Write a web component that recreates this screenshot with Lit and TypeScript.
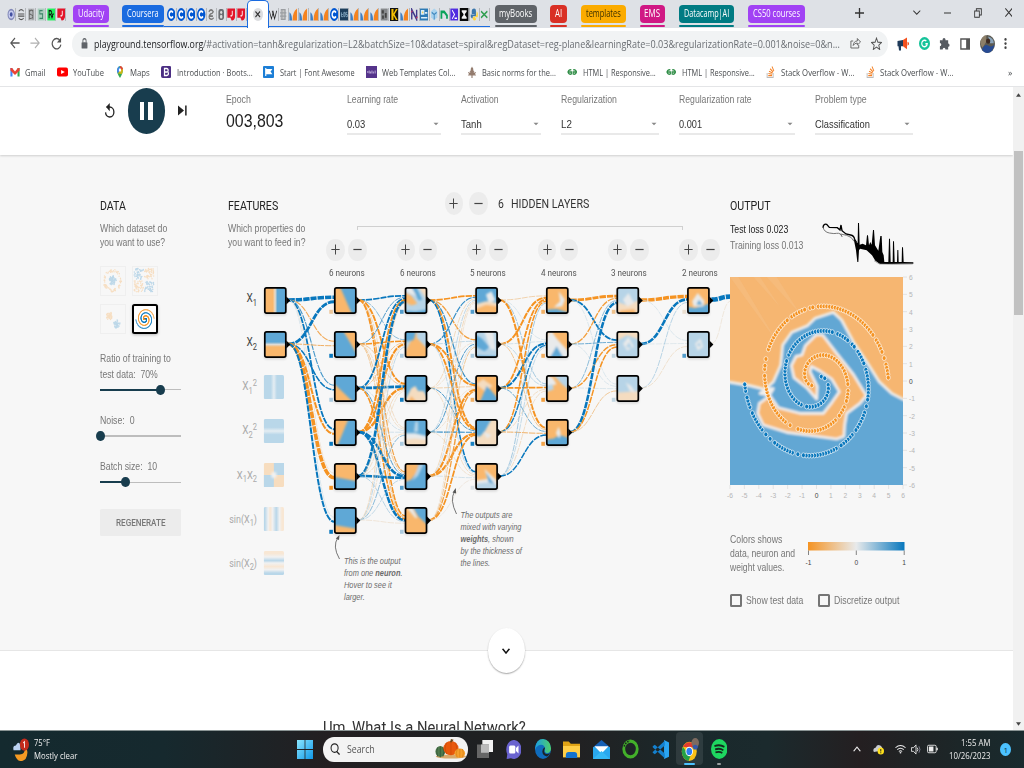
import { LitElement, html, svg, css } from "lit";
import { customElement, property } from "lit/decorators.js";

const O = "#f9b76c", B = "#5fa8d6", N = "#e8eaeb", LO = "#f4dcc0", LB = "#b7d4e7";
const BLUE = "#0877bd", ORANGE = "#f59322";

/** A single line of text condensed or widened to an exact advance width. */
@customElement("fit-text")
class FitText extends LitElement {
  @property({ type: Number }) w = 10;
  static styles = css`
    :host { display: inline-block; white-space: nowrap; flex: none; }
    .run { display: inline-block; transform-origin: 0 50%; white-space: pre; }
  `;
  firstUpdated() {
    const run = this.renderRoot.querySelector(".run") as HTMLElement;
    this.style.width = this.w + "px";
    const k = this.w / run.offsetWidth;
    run.style.transform = `scaleX(${k})`;
    run.style.marginRight = `${this.w - run.offsetWidth}px`;
  }
  render() { return html`<span class="run"><slot></slot></span>`; }
}

const t = (text: string, w: number, cls = "") => html`<fit-text class=${cls} .w=${w}>${text}</fit-text>`;
const ic = (w: number, h: number, body: unknown, vb = "0 0 24 24") =>
  html`<svg class="ic" width=${w} height=${h} viewBox=${vb} preserveAspectRatio="none">${body}</svg>`;

// ---------- favicons of the tab strip ----------
const fav: Record<string, unknown> = {
  ring: svg`<circle cx="12" cy="12" r="9" fill="#c9cdf0" stroke="#8288b8" stroke-width="3"/><circle cx="12" cy="12" r="4" fill="#4350a0"/>`,
  dots: svg`<path d="M5 6q7-6 14 0M3 11h18M3 15h18M5 19q7 5 14 0" fill="none" stroke="#555" stroke-width="2"/>`,
  grey: svg`<rect x="3" y="1" width="18" height="22" fill="#b5b8bb"/><path d="M17 6q-5-4-9 0t3 6 5 5-9 2M7 3v18M17 3v18" fill="none" stroke="#666" stroke-width="2"/>`,
  mint: svg`<rect x="2" y="1" width="20" height="22" fill="#a9cdbd"/><path d="M16 5H8v6h8v8H7" fill="none" stroke="#3c8468" stroke-width="2.4"/>`,
  rc: svg`<rect x="1" y="1" width="22" height="22" fill="#1ff05b"/><path d="M6 19V5h5q5 3 0 7H7m4 0 4 7m4-8q-5 0-3 6" fill="none" stroke="#111" stroke-width="2.5"/>`,
  red: svg`<path d="M1 1h22v16q-3 7-10 6l-3-5H1z" fill="#e3152a"/><path d="M15 5v7q-1 4-5 2" fill="none" stroke="#fff" stroke-width="2.5"/>`,
  c: svg`<circle cx="12" cy="12" r="12" fill="#0056d2"/><path d="M17 8.500a6 6 0 1 0 0 7" fill="none" stroke="#fff" stroke-width="4"/>`,
  two: svg`<path d="M5 7q7-7 13 0-3 4-8 4-6 4-3 8 7 4 12-1M7 15h10" fill="none" stroke="#777" stroke-width="3"/>`,
  eight: svg`<rect x="4" y="2" width="16" height="20" rx="5" fill="#6b6e72"/><circle cx="12" cy="8" r="3" fill="#ddd"/><circle cx="12" cy="16" r="3.500" fill="#ddd"/>`,
  w: svg`<path d="M1 5l6 15 5-13 4 13L22 5M9 5l7 15" fill="none" stroke="#222" stroke-width="2"/>`,
  flower: svg`<path d="M6 3h12v18H6zM9 3v18M15 3v18M3 9h18M3 15h18" fill="#ccc" stroke="#9a9da1" stroke-width="2"/>`,
  bars: svg`<path d="M1 8q7 2 8 15H1z" fill="#3f7fc4"/><path d="M10 23q0-16 13-22v22z" fill="#f58320"/>`,
  eds: svg`<rect x="0" y="1" width="24" height="22" fill="#1d3e5c"/><path d="M4 8v8h5M4 12h4M11 8v8h3l1-4-1-4zM21 8h-4v4h4v4h-4" fill="none" stroke="#8fb3cc" stroke-width="1.800"/>`,
  photo: svg`<rect x="2" y="1" width="20" height="22" fill="#85878a"/><path d="M5 4h6v6H5zM14 9h5v9h-5zM6 14h5v6H6z" fill="#444"/>`,
  k: svg`<rect width="24" height="24" fill="#111"/><path d="M4 2h6v8l7-8h5L13 12l9 10h-5l-7-8v8H4z" fill="#f5c000"/>`,
  n: svg`<path d="M5 21V3l14 18V3" fill="none" stroke="#433a8b" stroke-width="4"/><path d="M3 8l4-3M17 19l5-3" stroke="#d23a5f" stroke-width="2"/>`,
  pc: svg`<rect y="1" width="24" height="22" fill="#2d7ab5"/><path d="M4 5h7v6H4zM14 9h7M3 18h18" fill="#f4d35e" stroke="#dbeefa" stroke-width="3"/>`,
  cube: svg`<path d="M12 1l9 5v11l-9 6-9-6V6z" fill="#a9d3ef"/><path d="M5 8l7 4 7-4M12 12v9" fill="none" stroke="#3d86bd" stroke-width="2.500"/>`,
  arc: svg`<path d="M4 20V7l8 0 8 7v6" fill="none" stroke="#0aa35a" stroke-width="5"/>`,
  sum: svg`<rect x="1" y="1" width="22" height="22" fill="#4f2ce0"/><path d="M6 4l7 8-7 8M13 19h7" fill="none" stroke="#fff" stroke-width="2.500"/>`,
  blk: svg`<rect width="24" height="24" fill="#080808"/><path d="M5 4h14v3l-5 4v2l5 4v3H5v-3l5-4v-2L5 7z" fill="#f3f3f3"/>`,
  py: svg`<path d="M12 1Q5 1 5 6v5h8v1H2q-1 6 3 7h3v-4h9V5q0-4-5-4z" fill="#3a76ab"/><path d="M19 6q5 3 3 11h-8v2h4q-1 5-7 4-4-1-3-6l8-2q3-1 3-9z" fill="#ffd43b"/>`,
  x: svg`<path d="M3 6l18 12M21 6L3 18" fill="none" stroke="#2f9e4f" stroke-width="3.500"/>`,
};

// ---------- network data ----------
type Poly = [string, string];
const LX = [345.3, 416, 486.6, 557.3, 627.8, 698.4];
const RY = (i: number) => 300.5 + 44 * i;
const heat: [string, Poly[]][][] = [
  [
    [B, [[O, "-4,-4 6,-4 26,34 -4,34"]]],
    [B, [[O, "10,-4 34,-4 34,30"]]],
    [B, [[O, "-4,7 30,34 -4,34"]]],
    [B, [[O, "-4,-4 21,-4 2,34 -4,34"]]],
    [B, [[O, "-4,-4 34,-4 34,21 -4,15"]]],
    [B, [[O, "-4,20 34,25 34,34 -4,34"]]],
  ],
  [
    [LB, [[LO, "16,-4 34,-4 34,18"], [N, "-4,-4 10,-4 16,10 4,6"], [B, "8,-2 15,-2 24,14 19,15"], [O, "-4,4 8,9 17,19 8,21 -4,15"], [B, "-4,27 14,28 34,25 34,34 -4,34"]]],
    [O, [[B, "-4,-4 16,-4 12,9 3,13 -4,8"], [LB, "16,-4 34,-4 34,22 16,7"], [LB, "-4,14 8,10 -2,26"]]],
    [B, [[LO, "-4,34 8,15 14,12 18,18 26,18 34,30 34,34"], [O, "2,34 8,24 20,34"]]],
    [B, [[N, "-4,16 14,16 34,20 34,34 -4,34"], [LO, "-4,23 14,22 34,24 34,34 -4,34"], [LB, "14,2 18,2 18,14 12,14"]]],
    [B, [[O, "-4,-4 20,-4 16,10 8,19 -4,22"], [LB, "20,0 26,0 18,14 10,20"]]],
    [O, [[B, "8,-4 34,-4 34,22 18,10"], [N, "2,0 10,0 17,12 14,12"]]],
  ],
  [
    [B, [[N, "14,8 22,4 28,15 18,18"], [LO, "-4,20 14,16 34,18 34,34 -4,34"], [O, "-4,26 14,20 34,22 34,34 -4,34"]]],
    [LB, [[N, "10,-4 24,-4 28,22 20,20"], [B, "-4,2 8,8 19,18 12,23 -4,16"], [B, "-4,28 34,29 34,34 -4,34"]]],
    [O, [[LO, "0,10 10,4 24,12 12,18"], [B, "4,34 12,18 15,12 20,16 34,30 34,34"]]],
    [LO, [[B, "-4,-4 24,-4 12,14 5,20 -4,18"], [N, "10,14 22,18 16,22"]]],
    [O, [[N, "-2,20 16,18 12,6 30,20 30,30 0,30"], [LB, "-4,24 14,22 34,25 34,34 -4,34"], [B, "14,10 26,24 18,22"]]],
  ],
  [
    [O, [[N, "17,4 26,14 22,22 10,23 19,16"], [B, "-4,26 14,25 34,30 34,34 -4,34"]]],
    [O, [[N, "-4,2 6,-2 14,8 34,26 34,34 -4,34"], [LO, "-4,-4 8,-4 -4,14"], [B, "2,34 14,17 26,34"]]],
    [O, [[LB, "6,-4 34,-4 34,18 22,10"], [N, "-4,-2 8,2 14,10 -4,14"], [LB, "-4,12 8,10 10,16 -4,20"]]],
    [O, [[B, "-4,24 10,22 18,18 34,22 34,34 -4,34"], [N, "13,16 17,8 20,16 18,22"]]],
  ],
  [
    [LB, [[LO, "-4,16 12,20 34,14 34,34 -4,34"], [O, "4,27 24,25 30,34 0,34"], [N, "8,14 16,6 24,18 14,22"]]],
    [LB, [[LO, "-4,-4 34,-4 34,10 14,4 -4,12"], [N, "8,14 16,6 24,18 14,22"], [LB, "12,18 17,12 22,20"]]],
    [LB, [[LO, "-4,20 34,18 34,34 -4,34"], [N, "12,8 20,12 26,20 18,18"]]],
  ],
  [
    [O, [[B, "-4,22 10,24 34,18 34,34 -4,34"], [N, "6,16 14,6 24,16 22,22 8,22"], [B, "12,20 16,14 21,20"]]],
    [LB, [[N, "10,14 18,8 22,18 14,22"], [LB, "12,16 17,12 19,18"]]],
  ],
];
// Signed weights, source-major.
const W: number[][][] = [
  [[3.6, -1.1, 1.1, 1.8, -0.3, 0.2], [2.8, -1, 1.5, -2, -3.6, 2]],
  [
    [1.7, 0.8, -1.9, -0.5, -1.2, -1.5], [1, -1.5, -0.8, -0.4, -0.8, -0.8], [1.8, -0.8, 2.8, 0.3, 1, -1.6],
    [-1.8, -2, -2.4, 0.3, 2.6, 2.5], [2.6, -0.4, -0.5, -0.5, 2.6, 0.6], [-0.6, 0.5, -0.4, 0.8, 0.5, -0.3],
  ],
  [
    [-1.7, -1.3, 1.2, -2, 1.5], [1.2, 0.5, -1.9, -1.8, 0.5], [-0.6, -0.3, -0.7, 1, -0.5],
    [0.5, 1, -0.3, 1.2, -0.4], [-0.6, 0.3, -2, -2.2, 0.3], [-0.3, -0.8, -1.3, -1.7, -0.2],
  ],
  [[-0.7, 0.2, 0.7, -2], [-2, 0.3, 0.5, -0.8], [-1.8, 2, -1.7, 0.9], [-1.5, 1.4, -0.5, -1], [0.7, 0.5, -0.5, 1.5]],
  [[-2.8, 1.8, 0.2], [-1.3, 0.9, 0.2], [0.8, -1.4, 0.2], [2.5, -1.5, -0.8]],
  [[-3.4, 0.2], [2.6, 0.15], [0.6, -0.4]],
];
const bias: number[][] = [[-0.6, 1.5, 0.4, 1.5, -2, 1.5], [1, 0.4, 1.4, 0.4, 1, 0.4], [1, 0.4, -1, 1.4, 0.1], [-1, -1, -1.3, -1.2], [-0.7, 0.25, 0.25], [-0.2, 1]];

const mix = (v: number) => {
  const k = Math.min(1, Math.abs(v) / 1.5);
  const a = [232, 234, 235], b = v > 0 ? [8, 119, 189] : [245, 147, 34];
  return `rgb(${a.map((c, i) => Math.round(c + (b[i] - c) * k)).join(",")})`;
};
const wrapText = (x: number, y: number, s: unknown, fs = 10, cls = "d") =>
  svg`<text class=${cls} transform="translate(${x} ${y}) scale(.833 1)" font-size=${fs}>${s}</text>`;

function link(x1: number, y1: number, x2: number, y2: number, v: number) {
  const m = (x1 + x2) / 2;
  return svg`<path d="M${x1} ${y1}C${m} ${y1} ${m} ${y2} ${x2} ${y2}" fill="none" stroke=${mix(v)} stroke-width=${Math.max(0.6, Math.abs(v))} stroke-dasharray="6.4 1"/>`;
}

function cell(x: number, y: number, bg: string, polys: Poly[]) {
  return svg`
    <rect x=${x - 11.3} y=${y - 12.5} width="22.6" height="27.6" rx="2.500" fill="#000" opacity=".12" filter="url(#soft)"/>
    <path d="M${x + 11} ${y - 4}l4 4-4 4z" fill="#000"/>
    <svg x=${x - 10.4} y=${y - 12.6} width="20.8" height="25.2" viewBox="0 0 30 30" preserveAspectRatio="none">
      <rect width="30" height="30" fill=${bg}/>
      <g filter="url(#melt)">${polys.map(([c, p]) => svg`<polygon points=${p} fill=${c}/>`)}</g>
    </svg>
    <rect x=${x - 10.5} y=${y - 12.6} width="21" height="25.200" rx="1.800" fill="none" stroke="#000" stroke-width="1.700"/>`;
}

function network() {
  const links: unknown[] = [];
  const srcX = [275.3, ...LX];
  W.forEach((layer, l) => {
    const n = layer.length;
    layer.forEach((row, i) => row.forEach((v, j) => {
      links.push(link(srcX[l] + 13, RY(i) - 0.5, LX[l] - 11, RY(j) - 1 + ((i - (n - 1) / 2) / n) * 9, v));
    }));
  });
  links.push(link(LX[5] + 13, 299.5, 731, 296.5, 4.6));
  links.push(link(LX[5] + 13, 343.5, 731, 301, -0.25));
  const small = (k: number, body: unknown) =>
    svg`<svg x="263.700" y=${375 + 44 * k} width="20.300" height="24" viewBox="0 0 30 30" preserveAspectRatio="none" opacity=".4">${body}</svg>`;
  const lab = (xx: number, y: number, s: unknown, on = false, fs = 12) =>
    svg`<text class=${on ? "lab on" : "lab"} font-size=${fs} text-anchor="end" transform="translate(${xx} ${y}) scale(.833 1)">${s}</text>`;
  const sub = (s: string) => svg`<tspan font-size="9" dy="3.500">${s}</tspan>`;
  const sup = svg`<tspan font-size="9" dy="-8">2</tspan>`;
  return html`<svg class="net" width="502" height="323" viewBox="228 287 502 323">
    <defs>
      <filter id="melt" x="-20%" y="-20%" width="140%" height="140%"><feGaussianBlur stdDeviation="1.3"/></filter>
      <filter id="soft" x="-30%" y="-30%" width="160%" height="160%"><feGaussianBlur stdDeviation="1.2"/></filter>
      <linearGradient id="x1"><stop offset=".38" stop-color=${O}/><stop offset=".49" stop-color="#e9dccc"/><stop offset=".6" stop-color=${B}/></linearGradient>
      <linearGradient id="x2" x2="0" y2="1"><stop offset=".4" stop-color=${B}/><stop offset=".5" stop-color="#dedbd6"/><stop offset=".6" stop-color=${O}/></linearGradient>
      <linearGradient id="q1"><stop offset=".35" stop-color=${B}/><stop offset=".48" stop-color="#bcd9ea"/><stop offset=".52" stop-color="#bcd9ea"/><stop offset=".65" stop-color=${B}/></linearGradient>
      <linearGradient id="q2" x2="0" y2="1"><stop offset=".35" stop-color=${B}/><stop offset=".48" stop-color="#bcd9ea"/><stop offset=".52" stop-color="#bcd9ea"/><stop offset=".65" stop-color=${B}/></linearGradient>
      <linearGradient id="s1"><stop offset=".05" stop-color=${B}/><stop offset=".22" stop-color=${N}/><stop offset=".32" stop-color="#fad0a2"/><stop offset=".44" stop-color=${N}/><stop offset=".62" stop-color=${B}/><stop offset=".78" stop-color=${N}/><stop offset=".9" stop-color="#fad0a2"/></linearGradient>
      <linearGradient id="s2" x2="0" y2="1"><stop offset=".1" stop-color="#fad0a2"/><stop offset=".25" stop-color=${N}/><stop offset=".4" stop-color=${B}/><stop offset=".5" stop-color=${N}/><stop offset=".65" stop-color="#fad0a2"/><stop offset=".78" stop-color=${N}/><stop offset=".92" stop-color=${B}/></linearGradient>
    </defs>
    ${links}
    ${cell(275.3, RY(0), "url(#x1)", [])}
    ${cell(275.3, RY(1), "url(#x2)", [])}
    ${small(0, svg`<rect width="30" height="30" rx="2" fill="url(#q1)"/>`)}
    ${small(1, svg`<rect width="30" height="30" rx="2" fill="url(#q2)"/>`)}
    ${small(2, svg`<rect width="30" height="30" rx="2" fill=${O}/><path d="M15 0h15v15H15zM0 15h15v15H0z" fill=${B}/><circle cx="15" cy="15" r="4" fill=${N} filter="url(#melt)"/>`)}
    ${small(3, svg`<rect width="30" height="30" rx="2" fill="url(#s1)"/>`)}
    ${small(4, svg`<rect width="30" height="30" rx="2" fill="url(#s2)"/>`)}
    ${lab(257, 302, svg`X${sub("1")}`, true)}
    ${lab(257, 346, svg`X${sub("2")}`, true)}
    ${lab(257, 390, svg`X${sub("1")}${sup}`)}
    ${lab(257, 434, svg`X${sub("2")}${sup}`)}
    ${lab(257, 478.5, svg`X${sub("1")}<tspan dy="-3.5">X</tspan>${sub("2")}`, false, 11.3)}
    ${lab(257, 522.5, svg`sin(X${sub("1")}<tspan dy="-3.5">)</tspan>`, false, 10.8)}
    ${lab(257, 566.5, svg`sin(X${sub("2")}<tspan dy="-3.5">)</tspan>`, false, 10.8)}
    ${heat.map((col, l) => col.map(([bg, p], i) => svg`
      ${cell(LX[l], RY(i), bg, p)}
      <rect x=${LX[l] - 16} y=${RY(i) + 9.3} width="3.600" height="4" fill=${mix(bias[l][i])}/>`))}
    <path d="M339.500 559Q332 546 338 537.500" fill="none" stroke="#666" stroke-width=".9"/><path d="M335.800 538.500l3.700-3.500-.5 5z" fill="#555"/>
    <path d="M456.500 514Q449.500 500 454.500 491.500" fill="none" stroke="#666" stroke-width=".9"/><path d="M452.500 492.500l3.300-4.500.3 5.500z" fill="#555"/>
    ${wrapText(344, 563.5, "This is the output", 8.9, "note")}
    ${wrapText(344, 575.7, svg`from one <tspan font-weight="700">neuron</tspan>.`, 8.9, "note")}
    ${wrapText(344, 588, "Hover to see it", 8.9, "note")}
    ${wrapText(344, 600, "larger.", 8.9, "note")}
    ${wrapText(460.500, 517.5, "The outputs are", 8.9, "note")}
    ${wrapText(460.500, 529.5, "mixed with varying", 8.9, "note")}
    ${wrapText(460.500, 541.7, svg`<tspan font-weight="700">weights</tspan>, shown`, 8.9, "note")}
    ${wrapText(460.500, 553.8, "by the thickness of", 8.9, "note")}
    ${wrapText(460.500, 566, "the lines.", 8.9, "note")}
  </svg>`;
}

// ---------- output plot ----------
const rnd = (i: number) => { const s = Math.sin(i * 12.9898 + 4.1) * 43758.5453; return s - Math.floor(s); };
function spiral(delta: number, color: string, seed: number) {
  const out: unknown[] = [];
  for (let i = 1; i < 142; i++) {
    if (rnd(i + seed) < 0.14) continue;
    const r = 5 * Math.sqrt(i / 142), a = 1.75 * (r / 5) * 2 * Math.PI + delta;
    out.push(svg`<ellipse cx=${816.5 + r * Math.sin(a) * 14.42} cy=${381 - r * Math.cos(a) * 17.33} rx="2" ry="2.400" fill=${color} stroke="#fff" stroke-opacity=".75" stroke-width=".9"/>`);
  }
  return out;
}
const arm = "290,612 262,580 222,548 214,512 228,484 246,480 256,452 288,420 308,420 350,475 400,538 439,602 420,625 380,655 374,690 372,724 350,732 200,712 130,690 113,655 118,625 150,602 175,638 240,655 310,655 336,622 358,590 335,552 300,528 274,514 270,530 292,575";
const sea = "20,560 90,572 135,583 160,560 182,510 188,450 215,412 262,392 285,370 340,352 365,375 400,440 440,500 478,560 515,595 560,618 560,880 20,880";
function plot() {
  const k = [-6, -5, -4, -3, -2, -1, 0, 1, 2, 3, 4, 5, 6];
  return html`<svg class="plot" width="192" height="228" viewBox="730 273 192 228">
    <defs><filter id="edge"><feGaussianBlur stdDeviation="3.600"/></filter></defs>
    <svg x="730" y="277" width="173" height="208" viewBox="30 246 519 624" preserveAspectRatio="none">
      <rect x="30" y="246" width="519" height="624" fill="#f6b671"/>
      <path d="M30 246h25l120 200zM100 246h20l60 90zM140 246h30l70 110z" fill="#f5bf85" opacity=".5"/>
      <g filter="url(#edge)" stroke="#efeeec" stroke-width="8" stroke-linejoin="round">
        <polygon points=${sea} fill="#62a7d4"/><polygon points=${arm} fill="#f6b671"/>
        <path d="M120 595l20-14 20 0-12 20z" fill="#efeeec"/>
      </g>
    </svg>
    ${spiral(Math.PI, ORANGE, 900)}${spiral(0, BLUE, 17)}
    ${k.map(v => svg`<path d="M903 ${381 - v * 17.33}h4M${816.5 + v * 14.42} 485v4" stroke="#ddd" stroke-width=".8"/>
      <text class=${v ? "tick" : "tick zero"} transform="translate(${909} ${384 - v * 17.33}) scale(.833 1)">${v}</text>
      <text class=${v ? "tick" : "tick zero"} text-anchor="middle" transform="translate(${816.5 + v * 14.42} 498) scale(.833 1)">${v}</text>`)}
  </svg>`;
}

const thumbDots = (fn: (i: number) => [number, number, string], n: number, r = 0.9) =>
  Array.from({ length: n }, (_, i) => { const [x, y, c] = fn(i); return svg`<circle cx=${x} cy=${y} r=${r} fill=${c}/>`; });
const thumbs = [
  thumbDots(i => { const a = rnd(i) * 6.28, r = i % 2 ? rnd(i + 50) * 5 : 9.5 + rnd(i + 50) * 3; return [15 + r * Math.cos(a), 15 + r * Math.sin(a), i % 2 ? BLUE : ORANGE]; }, 150),
  thumbDots(i => { const x = rnd(i) * 12 + 1.5, y = rnd(i * 3 + 71) * 12 + 1.5, q = i % 4; return [x + (q & 1 ? 13.5 : 0), y + (q & 2 ? 14 : 0), q === 0 || q === 3 ? BLUE : ORANGE]; }, 200),
  thumbDots(i => { const a = rnd(i) * 6.28, r = rnd(i * 3 + 30) * 4.5; return [(i % 2 ? 20.5 : 11) + r * Math.cos(a), (i % 2 ? 20 : 11) + r * Math.sin(a), i % 2 ? BLUE : ORANGE]; }, 110),
  thumbDots(i => { const s = i % 2, j = i >> 1, r = (j / 150) * 12.5, a = 1.75 * (j / 150) * 6.283 + s * Math.PI; return [15 + r * Math.sin(a), 15 - r * Math.cos(a), s ? ORANGE : BLUE]; }, 300, 0.62),
];

const pm = () => html`<span class="pm">${ic(9, 11, svg`<path d="M12 1v22M1 12h22" stroke="#444" stroke-width="2.600"/>`)}</span><span class="pm">${ic(9, 11, svg`<path d="M1 12h22" stroke="#444" stroke-width="2.600"/>`)}</span>`;

@customElement("app-root")
class AppRoot extends LitElement {
  static styles = css`
    :host { display: block; width: 1024px; height: 768px; overflow: hidden; background: #fff; }
    * { box-sizing: border-box; }
    .ic { display: block; flex: none; }
    .shell { display: flex; flex-direction: column; width: 1024px; height: 768px; font-family: "Open Sans", "Noto Sans", sans-serif; font-size: 10px; color: #3c4043; }
    .tabs { height: 27.500px; background: #dee1e6; display: flex; align-items: stretch; flex: none; }
    .grp { display: flex; flex-direction: column; align-items: center; justify-content: space-between; padding-top: 5px; flex: none; height: 27px; }
    .pill { height: 17.500px; width: 100%; border-radius: 4px; color: #fff; display: flex; align-items: center; justify-content: center; line-height: 17px; }
    .pill.dark { color: #3a3000; }
    .bar { height: 1.600px; width: 100%; border-radius: 1px; }
    .favs { display: flex; padding-top: 7.500px; height: 27px; }
    .favs.first { margin-left: 6px; }
    .favs.line { border-bottom: 1.600px solid #1a6be0; }
    .favs.pre { padding-left: 2.500px; }
    .fv { width: 10.050px; height: 13.500px; padding-left: .5px; border-right: 1px solid #b4b7bb; }
    .active { width: 22px; height: 28px; border: 1.600px solid #1a6be0; border-bottom: 0; border-radius: 5px 5px 0 0; background: #fff; display: flex; align-items: center; justify-content: center; z-index: 1; }
    .xdot { width: 10.500px; height: 13px; border-radius: 50%; background: #dcdde0; display: flex; align-items: center; justify-content: center; }
    .wins { display: flex; align-items: center; height: 25px; margin-left: auto; }
    .tools { height: 32.500px; background: #fff; display: flex; align-items: center; padding-left: 9.500px; flex: none; }
    .nav { display: flex; gap: 10.500px; width: 62.500px; }
    .omni { width: 816px; height: 26px; border-radius: 11px / 13px; background: #f1f3f4; display: flex; align-items: center; padding: 0 6.500px 0 9px; font-size: 11.200px; color: #6a6e73; }
    .omni .host { color: #202124; margin-left: 5.500px; }
    .omni .share { margin: 0 0 0 auto; display: flex; gap: 9.500px; }
    .exts { display: flex; align-items: center; gap: 9.500px; padding-left: 9px; }
    .marks { height: 26.500px; display: flex; align-items: center; flex: none; border-bottom: 1.500px solid #e4e5e7; font-size: 9.600px; color: #4a4d50; padding-bottom: 1px; }
    .mk { display: flex; align-items: center; flex: none; }
    .view { height: 643px; display: flex; flex: none; overflow: hidden; }
    .page { width: 1013px; font-family: "Liberation Sans", Arial, sans-serif; background: #fff; overflow: hidden; }
    .scroll { width: 11px; background: #f1f1f1; display: flex; flex-direction: column; align-items: center; padding: 6px 0 4px; }
    .thumb { width: 9.500px; height: 164px; background: #c1c1c1; margin-top: 54px; }
    .scroll .down { margin-top: auto; }
    .controls { height: 68px; display: flex; box-shadow: 0 1px 2px rgba(0,0,0,.16); position: relative; z-index: 1; background: #fff; }
    .play { display: flex; align-items: center; height: 48px; width: 226px; padding-left: 104px; flex: none; }
    .pause { width: 37.700px; height: 45.500px; border-radius: 50%; background: #183d4e; margin: 0 13px 0 11px; margin-top: 1px; display: flex; align-items: center; justify-content: center; gap: 4px; }
    .pause i { width: 4.500px; height: 18px; background: #fff; }
    .ctl { display: flex; flex-direction: column; padding-top: 6.600px; font-size: 10.400px; color: #777; line-height: 14px; flex: none; }
    .sel { height: 20px; margin-top: 7.500px; border-bottom: 2px solid #e9e9e9; display: flex; justify-content: space-between; align-items: center; color: #333; font-size: 11.200px; padding-right: 2.500px; line-height: 18px; }
    .epoch { font-size: 18.500px; color: #222; line-height: 22px; margin-top: 2.500px; }
    .main { height: 496px; background: #f7f7f7; display: flex; padding-left: 100px; border-bottom: 1px solid #e6e6e6; }
    .h { font-family: Roboto, sans-serif; font-size: 12.600px; color: #222; line-height: 16px; height: 16px; display: flex; }
    .p { font-size: 10.400px; color: #777; line-height: 14px; display: flex; flex-direction: column; }
    .data { width: 128px; padding-top: 43px; flex: none; }
    .data .p { margin-top: 8.300px; }
    .sets { display: grid; grid-template-columns: 26px 26px; column-gap: 6px; row-gap: 8.500px; margin: 16.200px 0 16.300px -.5px; }
    .set { width: 26px; height: 30px; border: 1px solid #efefef; display: flex; align-items: center; justify-content: center; }
    .set .ic { opacity: .24; }
    .set.on { border: 2px solid #000; border-radius: 2.500px; background: #fff; box-shadow: 0 1px 3px rgba(0,0,0,.25); }
    .set.on .ic { opacity: 1; }
    .lbl { font-size: 10.400px; line-height: 16px; color: #777; display: flex; flex-direction: column; }
    .slider { width: 81px; height: 10px; display: flex; align-items: center; margin-top: 2px; }
    .slider + .lbl { margin-top: 18.300px; }
    .slider .done { height: 2px; background: #183d4e; }
    .slider .rest { height: 1.300px; background: #bdbdbd; flex: 1; }
    .slider .knob { width: 8.600px; height: 10px; border-radius: 50%; background: #183d4e; margin: 0 -4.300px; flex: none; z-index: 1; }
    .regen { width: 81px; height: 27px; background: #ececec; border-radius: 1.500px; display: flex; align-items: center; justify-content: center; font: 500 9.800px/27px Roboto, sans-serif; color: #777; margin-top: 22px; }
    .mid { width: 502px; flex: none; }
    .head { height: 132px; display: flex; }
    .feat { padding-top: 43px; width: 96.500px; flex: none; }
    .feat .p { margin-top: 8.300px; }
    .layers { padding-top: 37.500px; width: 405px; flex: none; }
    .lh { display: flex; align-items: center; padding-left: 120px; height: 23px; font: 12.600px/23px Roboto, sans-serif; color: #333; }
    .pm { width: 18.600px; height: 22.500px; border-radius: 50%; background: #ececec; display: flex; align-items: center; justify-content: center; flex: none; }
    .lh .pm + .pm { margin: 0 10.500px 0 6px; }
    .bracket { margin: 10.500px 0 0 32.500px; width: 326px; height: 4px; border: 1px solid #d0d0d0; border-bottom: 0; }
    .cols { display: flex; margin-top: 9px; }
    .col { width: 70.600px; flex: none; }
    .pmr { display: flex; gap: 3.500px; padding-left: 1.500px; height: 22.500px; }
    .nn { font: 9.600px/14px Roboto, sans-serif; color: #555; padding-left: 4.500px; margin-top: 4.500px; display: block; }
    .net { display: block; overflow: visible; }
    .lab { font-family: Roboto, sans-serif; fill: #aaa; }
    .on.lab { fill: #444; }
    .note { font-style: italic; fill: #6c6c6c; }
    .out { width: 200px; padding-top: 43px; flex: none; }
    .out .loss { display: flex; font-size: 10.400px; line-height: 16px; height: 51px; justify-content: space-between; padding: 8px 16px 0 0; color: #777; }
    .out .loss .dark { color: #222; }
    .lossl { display: flex; flex-direction: column; }
    .lossc { overflow: visible; }
    .plot { display: block; margin-top: 8px; overflow: visible; }
    .tick { font-size: 8px; fill: #b5b5b5; }
    .zero { fill: #444; }
    .legend { display: flex; margin-top: 32.500px; justify-content: space-between; padding-right: 26px; }
    .legend svg { overflow: visible; }
    .checks { display: flex; align-items: center; margin-top: 17.500px; font-size: 10.400px; color: #777; height: 16px; line-height: 16px; }
    .box { width: 11.500px; height: 13.500px; border: 2px solid #757575; border-radius: 1.500px; margin-right: 4.500px; }
    .checks .box ~ .box { margin-left: 14.500px; }
    .article { height: 79px; display: flex; flex-direction: column; position: relative; }
    .more { position: absolute; left: 487.700px; top: -22.500px; width: 37.600px; height: 45px; border-radius: 50%; background: #fff; box-shadow: 0 1px 1.500px rgba(0,0,0,.35); display: flex; align-items: center; justify-content: center; z-index: 2; }
    .um { font: 17px/22px Roboto, sans-serif; color: #333; margin: 65.500px 0 0 323px; }
    .task { height: 38px; flex: 1; background: linear-gradient(90deg, #142a2f 0, #16292e 16%, #231f21 32%, #1e2022 45%, #222021 55%, #1a292c 68%, #1b2a2d 75%, #241f21 84%, #1b2729 95%, #192a2e); border-top: 1px solid #8a9494; display: flex; align-items: center; color: #eee; font-size: 9.800px; line-height: 13px; }
    .weather { width: 297px; padding-left: 13px; display: flex; gap: 5px; flex: none; align-items: center; }
    .two { display: flex; flex-direction: column; }
    .search { width: 145px; height: 24.500px; border-radius: 11px / 12.250px; background: #f3f3f3; margin: 0 8.500px 0 9.500px; display: flex; align-items: center; padding: 0 2px 0 7px; color: #555; font-size: 10.500px; }
    .search fit-text { margin: 0 auto 0 7px; }
    .apps { display: flex; align-items: center; }
    .app { width: 29.400px; height: 36px; display: flex; align-items: center; justify-content: center; flex-direction: column; flex: none; position: relative; }
    .app.view-icon { width: 17px; margin-right: 5.500px; }
    .app.cur::before { content: ""; position: absolute; left: 1px; top: 1px; width: 27px; height: 33px; border-radius: 4px; background: rgba(255,255,255,.09); }
    .app.cur .ic { z-index: 1; }
    .app.cur::after { content: ""; position: absolute; bottom: 2px; width: 11px; height: 2.500px; border-radius: 2px; background: #4cc2ff; }
    .app.dot::after { content: ""; position: absolute; bottom: 2px; width: 4px; height: 2.500px; border-radius: 2px; background: #9a9fa0; }
    .tray { margin-left: auto; display: flex; align-items: center; padding-right: 13px; }
    .right { align-items: flex-end; margin: 0 5px 0 11px; }
    .badge { width: 10.600px; height: 13px; border-radius: 50%; background: #4cc2ff; color: #083048; font-size: 8px; display: flex; align-items: center; justify-content: center; margin-left: 5px; }
  `;

  private pill(label: string, color: string, w: number, tw: number, ml: number, dark = false) {
    return html`<div class="grp" style="width:${w}px;margin-left:${ml}px"><div class="pill ${dark ? "dark" : ""}" style="background:${color}">${t(label, tw)}</div><div class="bar" style="background:${color}"></div></div>`;
  }
  private favs(names: string[]) { return names.map(n => html`<span class="fv">${ic(8.4, 13, fav[n])}</span>`); }
  private gap(w: number) { return html`<span style="width:${w}px"></span>`; }

  private tabs() {
    return html`<div class="tabs">
      <div class="favs first">${this.favs(["ring", "dots", "grey", "mint", "rc", "red"])}</div>
      ${this.pill("Udacity", "#a142f4", 36, 26.5, 6.7)}
      ${this.pill("Coursera", "#1a6be0", 41.500, 32, 13.5)}
      <div class="favs line pre">${this.favs(["c", "c", "c", "c", "two", "eight", "red", "red"])}</div>
      <div class="active"><span class="xdot">${ic(5.500, 6.500, svg`<path d="M2 2l20 20M22 2L2 22" stroke="#333" stroke-width="4.500"/>`)}</span></div>
      <div class="favs line">${this.favs(["w", "flower", "bars", "bars", "bars", "bars", "c", "eds", "bars", "bars", "bars", "photo", "k", "bars", "n", "pc", "cube", "arc", "sum", "blk", "py", "x"])}</div>
      ${this.pill("myBooks", "#5f6368", 42, 33.500, 5)}
      ${this.pill("AI", "#d93025", 16.500, 7, 13.500)}
      ${this.pill("templates", "#fbab00", 45, 35, 14, true)}
      ${this.pill("EMS", "#d01884", 25.500, 16, 13.700)}
      ${this.pill("Datacamp|AI", "#007b83", 55, 45, 13.800)}
      ${this.pill("CS50 courses", "#a142f4", 57, 47, 14)}
      <div class="wins">
        ${ic(9, 10, svg`<path d="M12 0v24M0 12h24" stroke="#333" stroke-width="3.500"/>`)}
        ${this.gap(49)}${ic(7.500, 5, svg`<path d="M1 3l11 17L23 3" fill="none" stroke="#333" stroke-width="4"/>`)}
        ${this.gap(23)}${ic(7, 2, svg`<path d="M0 12h24" stroke="#333" stroke-width="12"/>`)}
        ${this.gap(23)}${ic(8, 10, svg`<path d="M2 7h14v15H2zM7 7V2h15v15h-6" fill="none" stroke="#333" stroke-width="2.500"/>`)}
        ${this.gap(23)}${ic(7.500, 9, svg`<path d="M1 1l22 22M23 1L1 23" stroke="#333" stroke-width="3"/>`)}
        ${this.gap(12)}
      </div>
    </div>`;
  }

  private toolbar() {
    return html`<div class="tools">
      <div class="nav">
        ${ic(10, 12, svg`<path d="M23 12H3M12 2L2 12l10 10" fill="none" stroke="#555" stroke-width="2.600"/>`)}
        ${ic(10, 12, svg`<path d="M1 12h20M12 2l10 10-10 10" fill="none" stroke="#b0b0b0" stroke-width="2.500"/>`)}
        ${ic(11, 13, svg`<path d="M20 7a9.500 9.500 0 1 0 1.500 7" fill="none" stroke="#555" stroke-width="2.600"/><path d="M22 1v9h-9z" fill="#555"/>`)}
      </div>
      <div class="omni">
        ${ic(7, 11, svg`<rect x="2" y="9" width="20" height="14" rx="2" fill="#5f6368"/><path d="M6.500 9V6a5.500 4.500 0 0 1 11 0v3" fill="none" stroke="#5f6368" stroke-width="3"/>`)}
        ${t("playground.tensorflow.org", 109, "host")}${t("/#activation=tanh&regularization=L2&batchSize=10&dataset=spiral&regDataset=reg-plane&learningRate=0.03&regularizationRate=0.001&noise=0&n...", 636.500)}
        <span class="share">${ic(11, 12, svg`<path d="M7 8H2v14h17v-6" fill="none" stroke="#666" stroke-width="2"/><path d="M7 17q1-9 9-9V3l7 7-7 6v-4q-6 0-9 5z" fill="none" stroke="#666" stroke-width="2"/>`)}
        ${ic(11, 13, svg`<path d="M12 2l3 7.500 8 .5-6 5 2 8-7-4.500L5 23l2-8-6-5 8-.5z" fill="none" stroke="#555" stroke-width="2"/>`)}</span>
      </div>
      <div class="exts">
        ${ic(12, 14, svg`<path d="M1 7l11-2v11l-4 0v7H4l-1-7H1z" fill="#1f3b5a"/><path d="M12 5l8-4v20l-8-5z" fill="#f4511e"/><path d="M21 8l3 2v3l-3 2z" fill="#f4511e"/>`)}
        ${ic(11, 13, svg`<circle cx="12" cy="12" r="12" fill="#15c39a"/><path d="M16 7.500a6 6 0 1 0 2 5h-4" fill="none" stroke="#fff" stroke-width="2.600"/>`)}
        ${ic(11, 13, svg`<path d="M2 6h6a3.200 3.200 0 1 1 6 0h6v6a3 3 0 1 1 0 6v5h-6a3 3 0 0 0-6 0H2v-6a3 3 0 0 0 0-6z" fill="#555a60"/>`)}
        ${ic(10.500, 12, svg`<path d="M2 2h20v20H2z" fill="none" stroke="#555" stroke-width="3"/><path d="M14 2h8v20h-8z" fill="#555"/>`)}
        ${ic(15, 18, svg`<circle cx="12" cy="12" r="12" fill="#5c5a52"/><path d="M1 8q5-9 9-7v8l-6 8q-4-4-3-9z" fill="#8d7f68"/><path d="M3 19q5-8 10-5t10-1q-2 10-11 11-6 0-9-5z" fill="#274b93"/><path d="M13 2q9 2 9 9h-6z" fill="#8aa4bb"/><circle cx="13" cy="8" r="3.500" fill="#3d2a22"/>`)}
        ${ic(3, 11, svg`<circle cx="12" cy="3" r="3" fill="#444"/><circle cx="12" cy="12" r="3" fill="#444"/><circle cx="12" cy="21" r="3" fill="#444"/>`, "8 0 8 24")}
      </div>
    </div>`;
  }

  private marks() {
    const gfg = svg`<path d="M10 8a5 4.500 0 1 0 0 8V12H1M14 8a5 4.500 0 1 1 0 8V12h9" fill="none" stroke="#2f8d46" stroke-width="2.600"/>`;
    const so = svg`<path d="M3 14v9h16v-9" fill="none" stroke="#bcbbbb" stroke-width="2.500"/><path d="M6 19h10M6.500 15l10 1.500M8 10.500l9.500 3.500M11 5.500l8 6.500M16 1l5 9" stroke="#f48024" stroke-width="2.500"/>`;
    const items: [number, number, unknown, string, number][] = [
      [9.5, 10, svg`<path d="M1 21V4h5v17z" fill="#4285f4"/><path d="M18 21V4h5v17z" fill="#34a853"/><path d="M1 4h4l7 7 7-7h4v5l-11 9L1 9z" fill="#ea4335"/>`, "Gmail", 20.5],
      [11, 11, svg`<rect y="3" width="24" height="18" rx="4" fill="#f00"/><path d="M9 8l8 4-8 4z" fill="#fff"/>`, "YouTube", 30.5],
      [12.5, 8, svg`<path d="M12 24Q2 14 3 8q2-7 9-8 8 1 9 8 0 6-9 16z" fill="#34a853"/><path d="M3 9q0-6 7-9l2 8-6 7q-3-3-3-6z" fill="#4285f4"/><path d="M12 0q7 0 9 6l-7 5z" fill="#ea4335"/><path d="M6 15l6-7 9-2q1 4-3 10z" fill="#fbbc04" opacity=".75"/><circle cx="12" cy="8" r="3.500" fill="#fff"/>`, "Maps", 19.5],
      [11.5, 10.5, svg`<rect width="24" height="24" rx="4" fill="#4b2e83"/><path d="M8 5h5q5 1 2.500 6.500 4 6-2.500 7.500H8zM8 12h6" fill="none" stroke="#fff" stroke-width="2.800"/>`, "Introduction · Boots...", 75.5],
      [11, 11, svg`<rect width="24" height="24" rx="2" fill="#1c7ed6"/><path d="M6 4v16M6 7h12l-3 4 3 4H6" fill="#fff" stroke="#fff" stroke-width="2.500"/>`, "Start | Font Awesome", 75],
      [11, 11, svg`<rect width="24" height="24" fill="#55348b"/><path d="M4 10v4M7 9v6M10 11v4M13 9v6M16 11v4M20 9v6" stroke="#d7c9ee" stroke-width="1.600"/>`, "Web Templates Col...", 73],
      [11.5, 10, svg`<path d="M12 1l4 6h-2l4 5h-2l6 7H2l6-7H6l4-5H8z" fill="#9b8578"/><path d="M12 4v20M3 13l6 3M21 13l-6 3" stroke="#8d7466" stroke-width="2.500"/>`, "Basic norms for the...", 74],
      [10.5, 10.5, gfg, "HTML | Responsive...", 72.5],
      [10.5, 10.5, gfg, "HTML | Responsive...", 72.5],
      [12, 9, so, "Stack Overflow - W...", 73.5],
      [11.5, 9, so, "Stack Overflow - W...", 73.5],
    ];
    return html`<div class="marks">${items.map(([ml, w, icon, label, tw]) =>
      html`<span class="mk" style="margin-left:${ml}px">${ic(w, 12, icon)}${this.gap(5.5)}${t(label, tw)}</span>`)}
      <span class="mk" style="margin:0 12px 0 auto">${t("»", 4.500)}</span></div>`;
  }

  private select(label: string, lw: number, val: string, vw: number, w: number, ml: number) {
    return html`<div class="ctl" style="width:${w}px;margin-left:${ml}px">${t(label, lw)}
      <div class="sel">${t(val, vw)}${ic(6, 4, svg`<path d="M2 4h20L12 20z" fill="#888"/>`)}</div></div>`;
  }

  private slider(p: number) {
    return html`<div class="slider"><span class="done" style="width:${p}px"></span><span class="knob"></span><span class="rest"></span></div>`;
  }

  render() {
    const cnt = [6, 6, 5, 4, 3, 2];
    return html`<div class="shell">
      ${this.tabs()}${this.toolbar()}${this.marks()}
      <div class="view">
        <div class="page">
          <div class="controls">
            <div class="play">
              ${ic(12.500, 15, svg`<path d="M5 6.500h6a8 8 0 1 1-8 8.500" fill="none" stroke="#222" stroke-width="2.500"/><path d="M11 0v13L4 6.500z" fill="#222"/>`)}
              <span class="pause"><i></i><i></i></span>
              ${ic(9, 11, svg`<path d="M0 1l16 11L0 23zM19 1h4v22h-4z" fill="#222"/>`)}
            </div>
            <div class="ctl" style="width:121px">${t("Epoch", 24.500)}<div class="epoch">${t("003,803", 57.500)}</div></div>
            ${this.select("Learning rate", 51, "0.03", 18.500, 94, 0)}
            ${this.select("Activation", 37.500, "Tanh", 20.500, 80, 20)}
            ${this.select("Regularization", 55.500, "L2", 10.500, 98, 20)}
            ${this.select("Regularization rate", 72.500, "0.001", 23, 116, 20)}
            ${this.select("Problem type", 51.500, "Classification", 55, 98, 19.500)}
          </div>
          <div class="main">
            <div class="data">
              <div class="h">${t("DATA", 26)}</div>
              <div class="p">${t("Which dataset do", 67)}${t("you want to use?", 65.500)}</div>
              <div class="sets">${thumbs.map((d, i) => html`<span class="set ${i === 3 ? "on" : ""}">${ic(i === 3 ? 22 : 23, i === 3 ? 26 : 27, d, "0 0 30 30")}</span>`)}</div>
              <div class="lbl">${t("Ratio of training to", 70.500)}${t("test data:  70%", 57.500)}</div>
              ${this.slider(60.5)}
              <div class="lbl">${t("Noise:  0", 34.500)}</div>
              ${this.slider(0.5)}
              <div class="lbl">${t("Batch size:  10", 57)}</div>
              ${this.slider(25.5)}
              <div class="regen">${t("REGENERATE", 49.500)}</div>
            </div>
            <div class="mid">
              <div class="head">
                <div class="feat"><div class="h">${t("FEATURES", 50.500)}</div>
                  <div class="p">${t("Which properties do", 77)}${t("you want to feed in?", 77.500)}</div></div>
                <div class="layers">
                  <div class="lh">${pm()}${t("6", 5.800)}${this.gap(7.5)}${t("HIDDEN LAYERS", 78.500)}</div>
                  <div class="bracket"></div>
                  <div class="cols">${cnt.map(n => html`<div class="col"><div class="pmr">${pm()}</div><span class="nn">${t(n + " neurons", 35.500)}</span></div>`)}</div>
                </div>
              </div>
              ${network()}
            </div>
            <div class="out">
              <div class="h">${t("OUTPUT", 40.500)}</div>
              <div class="loss"><div class="lossl"><span class="dark">${t("Test loss 0.023", 58)}</span>${t("Training loss 0.013", 73)}</div>
                <svg class="lossc" width="92" height="43" viewBox="306 80 276 129">
                  <path d="M309 95Q312 110 328 113T350 114Q362 112 366 124L362 116 380 120Q396 124 402 138" fill="none" stroke="#777" stroke-width="3"/>
                  <path d="M309 97Q310 84 320 87L328 96 352 97 360 104 363 89 366 106 378 116 392 119Q402 121 404 132L410 142" fill="none" stroke="#000" stroke-width="4"/>
                  <path d="M401 130L410 142 413 142 414 83 417 83 419 148 428 145 438 150 441 120 444 120 447 150 451 140 455 148 459 104 462 104 465 150 470 158 475 166 481 122 485 122 487 170 491 180 493 200 505 200 507 130 510 130 512 200 518 200 519 138 522 138 524 200 531 200 532 164 535 164 536 200 545 200 546 156 549 156 551 200 580 201 580 205 545 205 500 206 480 206 466 196 456 180 440 165 420 160 417 165 415 200 412 200 408 165z" fill="#000"/>
                  <path d="M462 196L478 206 520 207 578 206" fill="none" stroke="#888" stroke-width="2"/>
                </svg>
              </div>
              ${plot()}
              <div class="legend"><div class="p">${t("Colors shows", 52)}${t("data, neuron and", 65.500)}${t("weight values.", 54.500)}</div>
                <svg width="99" height="34" viewBox="805 533 99 34">
                  <defs><linearGradient id="bar"><stop stop-color=${ORANGE}/><stop offset=".5" stop-color="#e8eaeb"/><stop offset="1" stop-color=${BLUE}/></linearGradient></defs>
                  <rect x="808" y="542" width="96.500" height="8.500" fill="url(#bar)"/>
                  <path d="M808.500 550.500v4.500M856.300 550.500v4.500M904.200 550.500v4.500" stroke="#666" stroke-width=".8"/>
                  ${[[-1, 808.5], [0, 856.3], [1, 904.2]].map(([v, x]) => svg`<text class="tick zero" text-anchor="middle" transform="translate(${x} 565) scale(.833 1)">${v}</text>`)}
                </svg></div>
              <div class="checks"><span class="box"></span>${t("Show test data", 57.500)}<span class="box"></span>${t("Discretize output", 65)}</div>
            </div>
          </div>
          <div class="article">
            <span class="more">${ic(8, 6, svg`<path d="M2 3l10 17L22 3" fill="none" stroke="#111" stroke-width="5"/>`)}</span>
            <div class="um">${t("Um, What Is a Neural Network?", 202.500)}</div>
          </div>
        </div>
        <div class="scroll">${ic(5, 4, svg`<path d="M0 22h24L12 2z" fill="#444"/>`)}<div class="thumb"></div><span class="down">${ic(5, 4, svg`<path d="M0 2h24L12 22z" fill="#444"/>`)}</span></div>
      </div>
      <div class="task">
        <div class="weather">
          ${ic(16, 23, svg`<path d="M3 20q4 9 13 8 8-1 9-9 1-5-3-8-1 9-10 9z" fill="#f59a23"/><path d="M1 15q-2-6 4-6 4-6 8-1v7z" fill="#bcd3f2"/><ellipse cx="20" cy="8" rx="8" ry="7.500" fill="#c42b1c"/><path d="M18 6l2-1.500v7.500" fill="none" stroke="#fff" stroke-width="1.500"/>`, "0 0 28 28")}
          <div class="two">${t("75°F", 15.500)}${t("Mostly clear", 43.500)}</div>
        </div>
        ${ic(16, 19, svg`<defs><linearGradient id="win" x2="1" y2="1"><stop stop-color="#8be6ff"/><stop offset="1" stop-color="#1098e8"/></linearGradient></defs><path d="M0 0h11.400v11.400H0zM12.600 0H24v11.400H12.600zM0 12.600h11.400V24H0zM12.600 12.600H24V24H12.600z" fill="url(#win)"/>`)}
        <div class="search">
          ${ic(10, 12, svg`<circle cx="11" cy="10" r="8.500" fill="none" stroke="#222" stroke-width="2.500"/><path d="M16 17l7 6" stroke="#222" stroke-width="3"/>`)}
          ${t("Search", 27.500)}
          ${ic(31, 20, svg`<ellipse cx="18" cy="21" rx="17" ry="2.500" fill="#d9a96a"/><ellipse cx="6" cy="15" rx="5.500" ry="6.500" fill="#4e7a4d"/><path d="M6 9v13M3 10q-2 5 0 11M9 10q2 5 0 11" stroke="#35593a" fill="none"/><ellipse cx="18" cy="11" rx="8.500" ry="8.500" fill="#e8590c"/><path d="M18 3v16M13.500 4q-4 7 0 14M22.500 4q4 7 0 14" stroke="#cf4c08" fill="none"/><path d="M17 4l1-4 3 1-2 3z" fill="#6b4a1c"/><ellipse cx="28" cy="17" rx="6" ry="5.500" fill="#f59f2b"/><path d="M28 12v10M25 12q-2 5 0 10M31 12q2 5 0 10" stroke="#dd8518" fill="none"/>`, "0 0 35 24")}
        </div>
        <div class="apps">
          <span class="app view-icon">${ic(16, 18, svg`<rect x="8" width="16" height="16" fill="#f2f2f2"/><rect y="6" width="18" height="18" fill="#666"/><rect x="6" y="6" width="12" height="11" fill="#bbb"/>`)}</span>
          <span class="app">${ic(15, 19, svg`<path d="M12 0a12 12 0 1 1-4 23l-7 1 1-6A12 12 0 0 1 12 0z" fill="#6a63cf"/><rect x="5" y="7" width="10" height="10" rx="2" fill="#fff"/><path d="M16 10l4-3v10l-4-3z" fill="#fff"/>`)}</span>
          <span class="app">${ic(16, 20, svg`<defs><linearGradient id="ed" x2="1"><stop stop-color="#1b9de2"/><stop offset="1" stop-color="#4fd06a"/></linearGradient></defs><circle cx="12" cy="12" r="12" fill="#0f6cbd"/><path d="M0 11Q2 0 12 0q11 1 12 11 0 5-6 6-5-1-3-4 0-6-6-6Q2 8 0 13z" fill="url(#ed)"/><path d="M14 13q-1 5 4 5 4 0 5-2-2 4-5 5-7-1-7-6 0-3 3-5 2 1 0 3z" fill="#1b2327"/>`)}</span>
          <span class="app">${ic(17, 18, svg`<path d="M0 2h8l3 3h13v18H0z" fill="#e0a315"/><path d="M0 8h24v15H0z" fill="#ffce47"/><path d="M4 24v-4q0-4 4-4h8q4 0 4 4v4z" fill="#1272cf"/>`)}</span>
          <span class="app">${ic(17, 19, svg`<path d="M0 9L12 0l12 9v4H0z" fill="#1560b5"/><path d="M0 9h24v15H0z" fill="#2aa8ee"/><path d="M2 8h20L12 17z" fill="#fff"/><path d="M0 24L12 14l12 10z" fill="#35b8f5"/>`)}</span>
          <span class="app">${ic(17, 20, svg`<circle cx="12" cy="12" r="9.500" fill="none" stroke="#43b02a" stroke-width="4"/><path d="M3 9A9.500 9.500 0 0 1 11 2.500" fill="none" stroke="#192022" stroke-width="2" stroke-dasharray="2 1.500"/>`)}</span>
          <span class="app">${ic(17, 19, svg`<path d="M17 0l7 3v18l-7 3z" fill="#2aa5f2"/><path d="M18 1v6L4 18l-3-2v-1zM18 23v-6L4 6 1 8v1z" fill="#1481cf"/>`)}</span>
          <span class="app cur">${ic(18, 23, svg`<circle cx="11" cy="14" r="10" fill="#fbc116"/><path d="M2.500 9A10 9.500 0 0 1 19.600 9L11 10z" fill="#e33b2e"/><path d="M2.500 9A10 10 0 0 0 10 24l4-8-6-1z" fill="#24a148"/><circle cx="11" cy="14" r="5" fill="#fff"/><circle cx="11" cy="14" r="3.800" fill="#2d7ff0"/><circle cx="19" cy="5" r="5" fill="#7d6b60"/><path d="M15 9q4-4 8 0l-2 3h-4z" fill="#3559a8"/>`)}</span>
          <span class="app dot">${ic(16.500, 20, svg`<circle cx="12" cy="12" r="12" fill="#1ed760"/><path d="M5 8.500q8-2.500 14.500 1M6 12.500q7-2 12 1M6.500 16q6-1.500 10 .8" fill="none" stroke="#14281c" stroke-width="2.200"/>`)}</span>
        </div>
        <div class="tray">
          ${ic(8, 6, svg`<path d="M2 21L12 4l10 17" fill="none" stroke="#eee" stroke-width="3.500"/>`)}
          ${this.gap(12)}
          ${ic(11, 12, svg`<path d="M2 18q-4-7 4-9 3-7 10-4 6 3 4 10z" fill="#c9cccf"/><circle cx="17" cy="16" r="7" fill="#ffe01b"/><path d="M17 12v5M17 18.500v2" stroke="#222" stroke-width="2"/>`)}
          ${this.gap(11)}
          ${ic(11, 10, svg`<path d="M1 9q11-11 22 0M5 13.500q7-7 14 0M8.500 18q3.500-4 7 0" fill="none" stroke="#eee" stroke-width="2.200"/><circle cx="12" cy="21" r="2" fill="#eee"/>`)}
          ${this.gap(5)}
          ${ic(10, 11, svg`<path d="M1 8h5l6-6v20l-6-6H1z" fill="none" stroke="#eee" stroke-width="2"/><path d="M15 8q3 4 0 8" fill="none" stroke="#eee" stroke-width="2"/><path d="M19 5q5 7 0 14" fill="none" stroke="#889" stroke-width="2"/>`)}
          ${this.gap(6)}
          ${ic(11, 10, svg`<rect x="1" y="3" width="19" height="18" rx="3" fill="none" stroke="#eee" stroke-width="2"/><rect x="4" y="6" width="10" height="12" fill="#eee"/><path d="M22 9v6" stroke="#eee" stroke-width="3"/>`)}
          <div class="two right">${t("1:55 AM", 29.500)}${t("10/26/2023", 41.500)}</div>
          <span class="badge">1</span>
        </div>
      </div>
    </div>`;
  }
}
